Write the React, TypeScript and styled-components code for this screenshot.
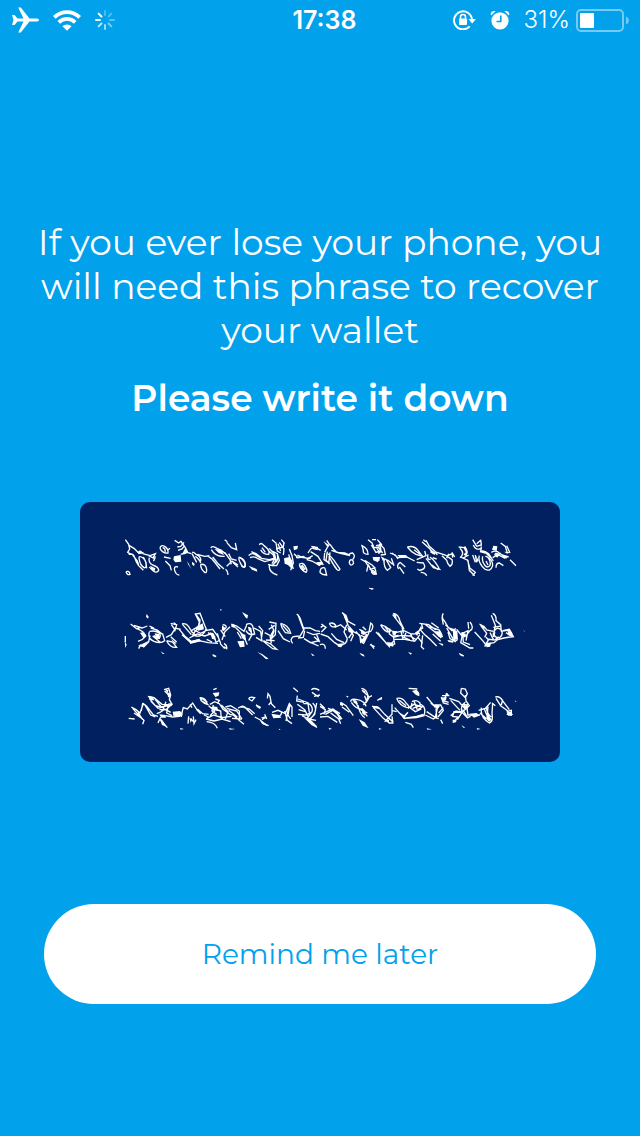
import React from "react";
import styled, { createGlobalStyle } from "styled-components";

const GlobalStyle = createGlobalStyle`
  * { box-sizing: border-box; }
  body { margin: 0; background: #02a1ec; }
`;

const Screen = styled.div`
  min-height: 100vh;
  display: flex;
  flex-direction: column;
  background: #02a1ec;
  color: #fff;
  font-family: Montserrat, Inter, "Liberation Sans", sans-serif;
`;

const StatusBar = styled.header`
  display: grid;
  grid-template-columns: 1fr auto 1fr;
  align-items: center;
  height: 40px;
  padding: 0 11px 0 12px;
  font-family: Inter, "Liberation Sans", sans-serif;
`;

const StatusGroup = styled.div<{ $end?: boolean; $gap: number }>`
  display: flex;
  align-items: center;
  gap: ${(p) => p.$gap}px;
  justify-content: ${(p) => (p.$end ? "flex-end" : "flex-start")};
`;

const Time = styled.time`
  font-size: 25px;
  line-height: 40px;
  font-weight: 600;
  padding-left: 8px;
`;

const Charge = styled.div`
  display: flex;
  align-items: center;
  gap: 6px;
`;

const Percent = styled.span`
  font-size: 24px;
  line-height: 40px;
  font-weight: 300;
`;

const Icon = styled.svg`
  display: block;
  flex: none;
`;

const Main = styled.main`
  flex: 1;
  display: flex;
  flex-direction: column;
  align-items: center;
  padding: 180px 32px 132px;
`;

const Message = styled.p`
  margin: 0;
  font-size: 36px;
  line-height: 44px;
  font-weight: 400;
  text-align: center;
`;

const Emphasis = styled.h1`
  margin: 24px 0 0;
  font-size: 36px;
  line-height: 44px;
  font-weight: 600;
  text-align: center;
`;

const PhraseCard = styled.section`
  align-self: stretch;
  margin: 82px 48px 0;
  border-radius: 10px;
  background: #002060;
`;

const PhraseArt = styled.svg`
  display: block;
  width: 100%;
  height: auto;
`;

const RemindButton = styled.button`
  align-self: stretch;
  height: 100px;
  margin: auto 12px 0;
  border: 0;
  border-radius: 50px;
  background: #fff;
  color: #02a1ec;
  font-family: inherit;
  font-size: 28px;
  line-height: 40px;
  font-weight: 400;
`;

type Segment = { x: number; y: number; lines: string; blobs: string };

// Scrambled phrase, three rows drawn in segments on a 1440 x 780 canvas.
const segments: Segment[] = [
  {
    x: 90,
    y: 69,
    lines:
      "M46 44l10 14 3 14-6 10 10 6M58 62l14 8 12 12 16 2M56 88q14-4 18 10t12 24l14 14M68 90l14 18 4 12M88 104q-4-12 6-8 12 6 14 20t-6 12q-12-8-14-24M100 96l8 16 2 18M98 86l22 6 16-6-8 14M116 92l16 8M118 98q-4 16 10 22 18 6 18 16-6 10-16 2-8-6-12-12M136 94q-2 10-6 14M48 140q10-4 12 8-8 4-12-8M150 70q2-12 14-6 12 8 10 20-16 2-24-14M158 68q8 2 8 12M172 76l8-6M162 96l20 4M166 108l14 14 4 14M194 46l12 8 8-6M202 66l10-2 10-12M204 76l12-4 8-10M212 48l14 20 8 16M212 88l20-6 12 4M204 126q-14-4-10 10 4 14 14 14M248 84q0-6 10 4 16 6 14 20M246 86l14 26M256 94q14 10 16 20M262 88l22 6 14-2M272 118q16-2 18 16 0 14-8 6-10-8-10-22M292 92l14 10 10 12 14 18M308 96l18 22 16 14M302 68q8-8 22 4 26 12 30 24M304 74q12 22 40 20M312 66l22 10 14 12M344 82l16 22 4 14M344 44l8 6M350 52l14 16 16 6-4-20M346 134q6 0 8 16M350 124l16-16 18 12M356 86l8 16 16 4M388 96q18 12 18 28-6 8-14-8t-4-20M368 112l16 14",
    blobs:
      "M82 82l8-6 12 8-16 4zM120 122l16 8-2 8-10-4zM192 94l20-4 2 20-18 2-6-8zM226 68l8 14-10 6-8 0zM314 72l20 2 8 16-16-6zM246 110l8 6-2 8-6-6zM232 108l12 24-10-14z",
  },
  {
    x: 480,
    y: 69,
    lines:
      "M0 98q14 4 16 20-4 14-12 4M26 92q10-12 24 0l14 8 24 4 20-6M30 98q12-6 22 2l22 10 30-8M34 80l14 6 16 12M58 60q4-10 14 2 20 14 14 26-18 0-24-14M66 68l10 14M88 70l16 18 4 18-10 16-14-4M84 76l16 14 4 12-8 14M96 78l16 8 6 20-8 16-22-2M112 90q4 18-8 24M88 122q-2 20 24 28M96 44l12 10 4 24 10 6M108 72l22-6 2-14M118 52l14 20-2 18M114 56l8 22M124 44l10 12M148 72l8 20 4 22-8 22M146 88l14 44M162 86l12 12 12-2M168 98l22-4 12 8 16-10M172 90l16 8 24 2M178 118q10-8 18 6t2 18q-18-8-20-24M182 122l10 14M186 120l10 14M204 84l8-12 12-6 18 10M212 80l22 14 16 26M214 64l20 4M200 104l16 4 24 14M244 130q10-6 12 4l4 16q-14 0-20-8 0-8 4-12M254 82q8-16 14-24l-8-12M254 84l-2 20 18 12M262 80l-4 26 8 8 4-32M270 58l10 14 10 10 24 2 16 6M274 76l24 8 32 8M264 86l18 20 18 26q-4 10-14-4l-20-34M276 112l14 20M330 90q-4-6 8-6 10 8 0 20M334 104q8 2 6 12-8 10-12-2 0-10 6-10M366 62q18 8 18 26-16 0-14-12zM362 102l14 8 8 12-4 18M384 118l12 22 14 8-8-10-14-6M384 44l12 10 6 14 16-2M394 60l14 22 12-4M408 66l8 12M374 106l22 14 10 10",
    blobs:
      "M132 100l16-4 10 12-2 24-12-12-10-4zM160 64l14-2-2 10-10 4zM228 112l18-2 4 8-14 4zM218 66l16 6-2 4-14-4zM250 48l16 12-4 6zM26 122l24 10 2 8-16-6zM398 96l22 0-2 12-16-4zM386 188l14 2 0 3-12-2z",
  },
  {
    x: 870,
    y: 69,
    lines:
      "M6 44l12 0M22 44l14 16M18 62q12-6 14 8t-8 14M28 56l14 14 4 18-14 2M24 66l14 18M4 132q14-8 14 14-8 6-14-6M42 108q4-12 10 2l10 18-10 8q-10-8-10-28M52 104l16 14M60 84l16 6 8 12M64 100l8 22M66 84l18 14 26-2 24 12M90 112q-12 8-4 20M88 126l14 20M90 112l16 14M112 66q20-6 32 10t14 18l-20-6q-16-8-26-22M132 74l18 14M140 112l20 2q12 18-12 22l-6-4M152 142q14 0 18 10M140 104l28-12-4-14M160 44l8 6M156 50l24 22 10 14M168 46l10 18 16 14 8 12M174 88q-4 16 8 16M168 100l22 28 22 6M180 96q16 12 28 36M188 98l12 4M186 120l18 14M194 80l32 10 20 14q4 14-6 20-8-8-10-18l-14-14M232 92l16-6 6 10M246 82l2 16M266 66l16 2 8 14-8 8M270 70q16 16 0 28M284 64q14 18 2 28M272 96l22 10 4 30 16 16M278 100l18-10M292 104l8 26 16 12-8 10M308 90l8 22M316 90l4 22M328 92q-6 20 16 40 18 10 24-10 0-18-16-26M338 94q-4 18 12 32 14 0 10-16t-14-16M348 108l6 12M330 80q10-6 26 6l14 22M342 78l20 20M308 44l12 20 14-4-2-16M310 60q6 18 26 10M320 56l12-10M334 64l-2 16 14 4M364 82q14-8 24 2l22 16M368 98l24-14M382 96q-12-8-4-10l28 14M378 128q0-14 10-14l12 8M392 54l14 10 6 20M410 62l10 22M396 90l20 6M420 104l18 18M236 86l-6 14",
    blobs:
      "M8 96l20 2-4 14-14-6zM82 90l26 0 6 8-24 0zM184 74l14 10-4 6-14-8zM370 62l12 2-2 14-14-4zM376 82l14 6-8 10zM318 92l8 14-4 6zM32 94l12 6-4 10zM0 190l12 2-8 2zM402 80l18 2-8 4z",
  },
  {
    x: 90,
    y: 294,
    lines:
      "M62 72l18 14 12-4M72 76l24 8 16-6M82 86l18 10M84 124l14-6 8-14M86 146l6-12M100 142l16-16 4-20M46 108v18M118 96q-6 20 14 28t32-2l-6-20q-18-12-40-8M122 84l20 6 14 12M128 108l22 18M134 94q20 4 16 16t-18-4M118 78l14 6M168 112l16-8 10-16-10-14M182 70l18 4-6 20M170 122l18 4 12 16q-20 2-30-20M182 110l18 16M194 84l18 4M216 72q12-4 20 8t8 14l18 16M218 74l26 30M206 86l18 22 22 18M216 104l24 22 26-6M244 92q12-10 20-8l4-18-12-24 14-2 14 36 6 14M252 98q18-18 18-38l-12-16M246 104q30 14 42-16M252 90l20 10 20-10M238 114l24-12 22 6 24-8M240 130l28-8 26 6 30 2M286 92l22-4 16 22 8 20M294 98l22 14M308 100l10 26 10-4-6-22M290 118l16 8M332 90l14 20M342 130q10 6 8 16l-8-6M330 130l14 16M338 74q16 2 8 12t-8-2M360 80l-16 16-8 24M364 72l16 6 22 16 8-18M376 82l24 24 12 28M382 96l12 20M408 74q14-8 20 4l6 24q-18 6-26-10M432 84l20 10 4 30M418 82l8 22-10 18M446 78l12 14-4 24M438 112l20 12M464 98l16 8 4 24M460 122l22 10 18 16-12-2-28-22M468 120l26 2M478 66l20 4-2 34-16 16M476 88l18-12M484 74l8 18-8 24M492 88l-12 24M512 70q26 6 30 30l-16-2q-12-14-14-28M518 76l18 20M504 92l16 24 20 10M560 42q10 6 14 24l8 22-12 20-20 2q-12 8-2 20M564 44l16 44M582 84l18 0 16 8 14 2M584 92l-4 20-16 2M590 96l20 8 20-4M582 116l20 12 26-6M594 124l32 14M612 110l18 16M620 104l8 20",
    blobs:
      "M90 98l12-2 8 12-8 8zM84 138l20-10 12-6-14 20zM134 100l14 2 2 16-12-4zM110 42l6 8-2 6-6-6zM256 82l22-12 4 18-18 4zM246 122l22-6 6 8-28 6zM300 96l12 6 6 18-12-4zM396 36l18 10-2 10-6-4zM336 76l10 8-4 10-6-4zM364 72l14 4-4 8-10-4zM390 100l16 4 2 18-10-6zM382 124l20-2 2 18-14 2zM414 80l10 4 2 14-10-6zM182 116l18 14-6 2zM308 162l12 6-4 4-8-4zM152 154l12 8-6 0zM442 156l14 6 20 14-8 2-10-10zM602 160l12 6-6 2zM44 122l6 12-4 10zM330 26l6 4-4 2zM190 66l8 4-4 6z",
  },
  {
    x: 720,
    y: 294,
    lines:
      "M4 72l14 10-14 14M2 82l10-6M0 134q16-6 16 12M28 70q14-4 20 8-14 8-20-8M44 82l18-8 18 16M2 102l22 8 20 18 18 12M34 100l16 18 22 10M66 38l12 8 6 18 22 12M72 42l12 34 16 18-14 20M80 74l-8 22 10 20M94 92l24 12 10 26M88 86l12 20-8 18M56 136q24 0 26-20M108 94l12 16 2 16 18-22M118 88l22 16-10 22M128 80l10 10M134 98l18-4q14-18-2-26M152 70l-6 30-16 32M122 106l18 8M136 108l-10 22M152 132l10 14M150 134l14 6M182 74q16 4 32 18l-12 4q-14-8-20-22M194 78l14 20M168 96l28 30 14 16M174 98l26 34 20 6M200 132q8 8 22-10M206 136l18-4-4-24 16-2M220 40q16 2 20 24l12 24M218 44l28 36 4 20M210 86l-2 16 14 10M226 98l26-6 22 10 26-2M220 112l24-6 26 2 20 12M224 118l30 0 30 6 16-20M242 92l8 28M258 98l-6 14 18 8M272 102l10 22M286 100l22-16-4-14M300 88l12 14 18 16 20 20M298 70l28 4 22 16M314 72l28 22 22 20M304 80l-14 26M308 106l-4 34 8 8M294 112l14 18M328 80l30 10 8 16M334 68l22 16M338 102l24 22M370 40q-8 12 4 24l12 20 14 4M376 74l20 18 12-6M366 52l4 22M380 84l20 34 12 4M384 96l6 20 18 10M410 88l16 20-4 22M420 104l24-12-6 30M428 96l2 30 20 8M422 128l28 16 10 0M436 110l14-18q14-8 0-26M444 66l2 20M464 96l26 28 10 14M478 72q16 6 22 18l20 4M482 76l18 24-6 12M518 40q12 6 10 22l14 12 2 20 24-4M514 46l12 30-4 20M494 140l12-22 18 2 12-10M500 132l22-4 12-10M528 120l24-6 24-4M548 92l20-4 12 22-16 2M558 98l12 8M520 82l24-4M522 96q6-16 20-8 10 14-2 24-18 4-18-16M510 98l10 20M498 112l8 8",
    blobs:
      "M68 40l8 6 8 20-8-6zM82 80l14 8 2 12-12-4zM52 132l18-2-6 12-10-2zM122 88l12 6 0 12-10-4zM218 40l10 4 2 12-6-2zM216 92l16 2-6 12-8-2zM200 126l18 2 2 10-14 0zM342 94l20 0 8 18-14-2zM398 86l14 8 2 26-14-4zM382 120l18 2 0 6-14-2zM424 96l14 6-2 10-10 0zM480 74l14 4 2 8-10-2zM496 128l18 0-4 12-10 2zM518 98l8-2-2 16-6-2zM562 92l14 4 2 14-12-4zM118 158l14 6 2 6-10-4zM264 156l12 4-4 4zM416 158l16 8-2 4-10-4zM354 128l16 4-2 6zM610 90l6 6-4-2z",
  },
  {
    x: 90,
    y: 519,
    lines:
      "M56 130l18 2M64 96l14 8 12 10 10-28 10 8 20 26 14 4M68 100l20 22 14 14-4 12M72 114l26 18M84 112l14 22M98 84l-4 24M104 88l18 32 14 6M116 64l16 4 24 20 26 2M118 70l18 22 24 6M122 78l22 22 14-4M136 74l18 22 22-4M162 44l14-4 6 20-4 14 8 14-16 14-16 6M164 48l16 16M168 80l-8 20 12 8M176 86l-6 28 16 8M148 104l20 0 14 8M140 116q18-6 22-14M152 126l-8 18M152 134l20 24M166 122l22 4 20-2M214 120l6-22 12 4 16-18 14 22 10 10M240 88l6 10M218 104l-4 22M236 124l-2 22M242 130l10 12M250 124l2 22 6-12M262 102l16 14 18 2M270 68q18 0 22 20-18-4-22-20M278 72l14 10M272 76l24 14M310 44l10-4M316 72l12 4-6 10M300 88l14-8 14 6 12 18M296 92l18 16-14 14M304 98l28 10 2 24M310 90l-4 18 14 10M290 130l22-10 22 8 30-4M288 132l24 6 24-6 26 8M296 126l-14-6M334 90l20 20-8 22M338 102l22 16 18 4M346 96l16-4 26 16 0 22M350 100l30 8 16 24M356 106l26 20M370 120l20 18 12 10M366 130l30 2M384 100q16-12 20-2l14 4 16 14M390 96l14 0 24 24M290 140q26 2 32 20M416 72q2-8 18-4l-8 10-10-6M438 90l14 8M434 126l16 8 10 12 16 6M456 134l12-8M464 118l6 14M472 70l2-14 6 8 4 22 12 12M482 82l-6 8M486 112l18-6 22 10 12-30 8 10 0 30M490 124q22 8 26-14M524 108l8 28 14 10M536 98l-8 40M540 88l-6 32 8 12M550 38l14 12M562 62l-2 16 22 4M564 72l32 12M580 86l14 0 4 26M562 88l22 16 12 24M566 104l20 6M564 118l24 2 16-8M596 86q14 8 10 24l-16 22M608 84q14 12 6 30t-20 18M620 84l-6 34-14 14M604 44q10-8 24 2M606 52l20 14M612 64l18-4M576 122l20 10 22 4",
    blobs:
      "M112 62l16 4 6 10-12 0zM172 52l10 4-2 12-6-2zM164 42l12 4-4 8zM188 110l22-2 8 10-8 8-20-4zM148 130l8 4 14 22-14-6zM148 118l18 2 2 8-14 0zM176 84l12 2-4 8zM308 54l20-2-2 10-10 4zM308 94l14 2 2 12-12-2zM326 122l14 4-4 8zM438 88l14 8-2 6-10-6zM448 132l20 14 4 8-16-8zM484 116l24 4 6 8-24 2zM452 128l14-4-4 8zM582 128l20 6 18 18 2 8-18-10zM268 66l12 4-4 6zM210 159l12 3-10 2zM356 160l20 2-16 2zM506 161l6 2-4 2zM238 128l8 6-4 10z",
  },
  {
    x: 720,
    y: 519,
    lines:
      "M0 86l14 14M0 118l20-8 18-8 22 14M0 126l24-2 28 18M16 118l22-12 24 20M24 100l22 8 16 26M32 114l24 18 6 14M40 102l26 30M0 94l16 10-4 14M62 82l16 10 22 30M66 96l22 16M92 80q0-10 20-6 22 4 26 20M94 82q14 20 30 20l18 22M104 76l14 26 24 12M114 90q4 26 20 38M124 40q16 2 20 22M126 46l22 20 8-4M134 62l6 18 8-14M140 78l-10 12M144 60l-4 20M172 76l14-8M156 94l20 4 18 20 24 22-2-16M160 98l30 32 18 14M194 140l22-22 0-30M206 130l14 10M206 144l14 0M230 70q18-4 28 14 14 12 4 14-24-6-32-28M238 76l20 16M214 106l16 4M224 98l18 20 14 14M240 116l14 8 8-10M276 80q14-8 24 4l0 8-22 8M264 100l18-12 24 8-12 8M276 84l-4 16 14 10 18-8M282 78l10 26M302 88q18 8 10 34l-22 6-36 2M250 130l40-6 20-6M264 112l-16 16M256 142l18 6 6 10M266 40l26 2M320 66l22 26 12 4M332 84l14 12M344 90l18 0 8 16-16 20M348 100l2 24-10 8-24-12M354 92l-8 34 10 6M320 110l30 20M370 98l-14 16M362 134l6 12M364 66l6 18 16 4M366 62l22 0M380 54l-8 24 14 4M388 70l28 10 20 22M392 76l28 30M424 40l12 2 6 14-6 12-14-14 2-14M436 60l2 18 10 14-20 18M424 88l20 2M436 82q-16 12-10 28l-24 0-4 14 16 2-12 14M392 122l16-14 18 4 16 16 10-4M402 112l24 0-14 22M428 104l16 26M440 92l4 30M444 120l36 0M476 106l20-6 16-18M484 98q-4 30 24 46 12-4 8-28l2-32M492 100l16 38M498 96q4 22 16 30M504 94l-2 24 14 22M516 84l10 8M480 114l20 18M526 66q14-4 22 12l20 26M528 70l14 22 22 16M548 74l-4 16M560 110l14-4 0 16M560 118l18 0",
    blobs:
      "M60 82l10 4-2 8-8-4zM98 74l12 4 4 10-12-4zM116 132l18 10 12 18-18-8zM156 92l18 2 4 8-16-2zM126 98l10 10-2 14-8-8zM276 48l14-4 8 10 0 10-10-4zM194 136l14-2-2 8zM340 88l20 4-4 8-12-2zM362 68l18-2-2 10-10 2zM382 54l6 8-10 0zM448 116l22-2 8 8-16 6zM398 134l12 0-2 8-10 2zM430 90l16 2-4 10-10-2zM498 124l12 6 2 12-10-6zM560 112l14-2 2 12-12 0zM424 150l12 8-6 0zM26 158l10 3-8 3zM176 159l10 3-8 2zM320 160l16 3-14 1zM470 159l12 3-10 2zM584 76l6 4-4 0zM178 72l8-6-2 10zM130 44l8 8-8 0zM78 62l8 2-4 4z",
  },
];

const AirplaneIcon = () => (
  <Icon width="27" height="26" viewBox="0 0 27 26" fill="#fff" aria-label="Airplane mode" role="img">
    <path d="M0 8h2.500l3 3.500h6L6.200 0.500h2.600l8.700 11h7c1.600 0 2.500.7 2.500 1.500s-.9 1.500-2.500 1.500h-7l-8.700 11H6.200l5.300-11h-6L2.500 18H0l1.500-5z" />
  </Icon>
);

const WifiIcon = () => (
  <Icon width="28" height="21" viewBox="0 0 28 21" fill="none" stroke="#fff" strokeWidth="3.800" aria-label="Wi-Fi" role="img">
    <path d="M1.300 7.300a18 18 0 0 1 25.400 0" />
    <path d="M5.800 12.300a11.700 11.700 0 0 1 16.400 0" />
    <path d="M14 20.800l-4.600-4.500a6.500 6.500 0 0 1 9.200 0z" fill="#fff" stroke="none" />
  </Icon>
);

const spokes = [0.3, 0.3, 0.35, 0.45, 0.6, 0.75, 0.9, 1];

const SpinnerIcon = () => (
  <Icon width="20" height="20" viewBox="-10 -10 20 20" stroke="#fff" strokeWidth="2" strokeLinecap="round" aria-label="Network activity" role="img">
    {spokes.map((opacity, i) => (
      <line key={i} x1="0" y1="-9" x2="0" y2="-5" opacity={opacity} transform={`rotate(${i * 45})`} />
    ))}
  </Icon>
);

const LockIcon = () => (
  <Icon width="23" height="20" viewBox="0 0 23 20" fill="none" stroke="#fff" aria-label="Rotation lock" role="img">
    <path d="M16.700 16.400A9 9 0 1 1 19 9.500" strokeWidth="2" />
    <path d="M15.500 9h7.500l-3.800 4.500z" fill="#fff" stroke="none" />
    <rect x="6" y="8.500" width="8" height="6.500" rx="1" fill="#fff" stroke="none" />
    <path d="M7.500 9V7a2.500 2.500 0 0 1 5 0v2" strokeWidth="1.500" />
  </Icon>
);

const AlarmIcon = () => (
  <Icon width="20" height="20" viewBox="0 0 20 20" fill="#fff" aria-label="Alarm" role="img">
    <circle cx="10" cy="10.800" r="8.600" />
    <path d="M1 5.500C0 3 2 .5 5.500 1.200zM19 5.500c1-2.500-1-5-4.500-4.300z" />
    <path d="M10.800 5.500v6H6.500" fill="none" stroke="#02a1ec" strokeWidth="1.600" />
  </Icon>
);

const BatteryIcon = () => (
  <Icon width="53" height="24" viewBox="0 0 53 24" aria-label="Battery" role="img">
    <rect x="1" y="2" width="46" height="21" rx="4" fill="none" stroke="#fff" strokeWidth="2" opacity="0.45" />
    <path d="M50 8.500q3 1.500 3 4t-3 4z" fill="#fff" opacity="0.45" />
    <rect x="4" y="5" width="14" height="15" rx="1" fill="#fff" />
  </Icon>
);

export default function App() {
  return (
    <Screen>
      <GlobalStyle />
      <StatusBar>
        <StatusGroup $gap={14}>
          <AirplaneIcon />
          <WifiIcon />
          <SpinnerIcon />
        </StatusGroup>
        <Time>17:38</Time>
        <StatusGroup $end $gap={14}>
          <LockIcon />
          <AlarmIcon />
          <Charge>
            <Percent>31%</Percent>
            <BatteryIcon />
          </Charge>
        </StatusGroup>
      </StatusBar>
      <Main>
        <Message>If you ever lose your phone, you will need this phrase to recover your wallet</Message>
        <Emphasis>Please write it down</Emphasis>
        <PhraseCard aria-label="Recovery phrase">
          <PhraseArt viewBox="0 0 1440 780" aria-hidden="true">
            {segments.map((s, i) => (
              <g key={i} transform={`translate(${s.x} ${s.y})`}>
                <path d={s.lines} fill="none" stroke="#fff" strokeWidth="4" />
                <path d={s.blobs} fill="#fff" />
              </g>
            ))}
          </PhraseArt>
        </PhraseCard>
        <RemindButton type="button">Remind me later</RemindButton>
      </Main>
    </Screen>
  );
}
